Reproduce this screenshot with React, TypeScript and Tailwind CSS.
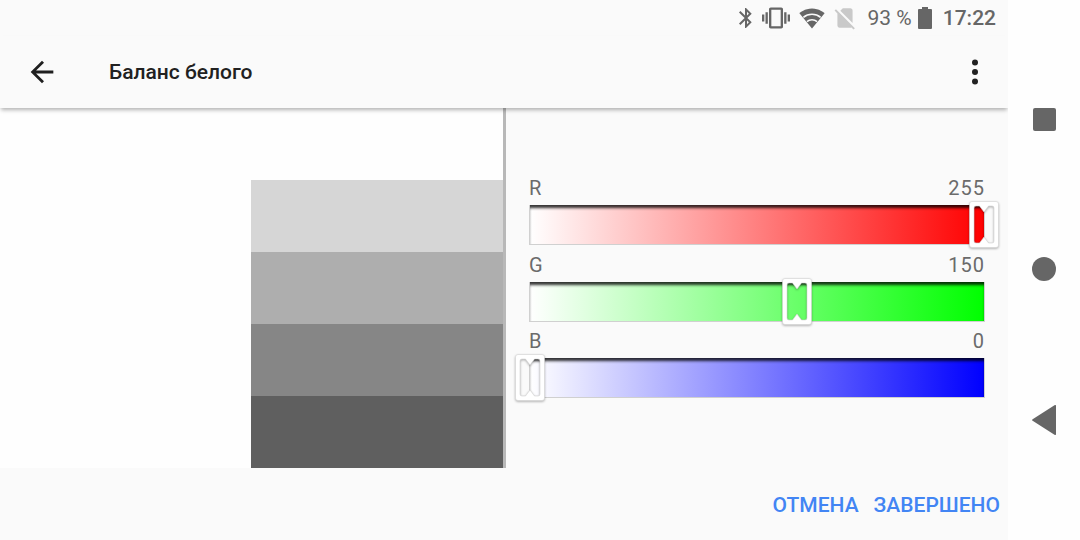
const channels = [
  { label: 'R', value: 255, gradient: 'bg-[linear-gradient(to_right,#ffffff,#ff0000)]' },
  { label: 'G', value: 150, gradient: 'bg-[linear-gradient(to_right,#ffffff,#00ff00)]' },
  { label: 'B', value: 0, gradient: 'bg-[linear-gradient(to_right,#ffffff,#0000ff)]' },
];

function Thumb({ value }: { value: number }) {
  return (
    <svg
      viewBox="0 0 30 47"
      className="absolute top-[-4px] w-[30px] h-[47px] -translate-x-1/2 drop-shadow-[0_1px_1px_rgba(0,0,0,0.3)]"
      style={{ left: `${(value / 255) * 100}%` }}
    >
      <path
        fillRule="evenodd"
        fill="#ffffff"
        stroke="#d4d4d4"
        strokeWidth="0.6"
        d="M3 .5h24a2.500 2.500 0 0 1 2.500 2.500v41a2.500 2.500 0 0 1-2.500 2.500H3A2.500 2.500 0 0 1 .5 44V3A2.500 2.500 0 0 1 3 .5zM7 5a2 2 0 0 0-2 2v33a2 2 0 0 0 2 2h3.500l4.500-6 4.500 6H23a2 2 0 0 0 2-2V7a2 2 0 0 0-2-2h-3.500L15 11l-4.500-6z"
      />
    </svg>
  );
}

function StatusIcons() {
  return (
    <div className="flex items-center text-[#666666]">
      <svg viewBox="0 0 24 24" className="w-[24px] h-[24px] mr-[4px]" fill="currentColor">
        <path d="M17.71 7.71L12 2h-1v7.59L6.41 5 5 6.41 10.59 12 5 17.59 6.41 19 11 14.41V22h1l5.71-5.71-4.3-4.29 4.3-4.29zM13 5.83l1.88 1.88L13 9.59V5.83zm1.88 10.46L13 18.17v-3.76l1.88 1.88z" />
      </svg>
      <svg viewBox="0 0 24 24" className="w-[28px] h-[28px] mr-[9px]" fill="currentColor">
        <path d="M0 15h2V9H0v6zm3 2h2V7H3v10zm19-8v6h2V9h-2zm-3 8h2V7h-2v10zM16.5 3h-9C6.67 3 6 3.67 6 4.5v15c0 .83.67 1.5 1.5 1.5h9c.83 0 1.5-.67 1.5-1.500v-15c0-.83-.67-1.500-1.500-1.500zM16 19H8V5h8v14z" />
      </svg>
      <svg viewBox="0 0 26 24" className="w-[26px] h-[24px] mr-[7px]" fill="currentColor">
        <path d="M13 22.500L.4 7.200C1 6.700 5.800 2.500 13 2.500s12 4.200 12.600 4.700L13 22.500z" />
        <path d="M4.400 11.400C6.600 9.500 9.600 8.300 13 8.300s6.400 1.200 8.600 3.100M7.900 15.700c1.400-1.200 3.200-1.900 5.100-1.900s3.700.7 5.100 1.900" fill="none" stroke="#fafafa" strokeWidth="1.600" />
      </svg>
      <svg viewBox="0 0 24 24" className="w-[26px] h-[26px] mr-[10px] text-[#c9c9c9]" fill="currentColor">
        <path d="M18.99 5c0-1.100-.89-2-1.990-2h-7L7.660 5.340 19 16.680 18.990 5zM3.650 3.880L2.380 5.150 5 7.770V19c0 1.100.9 2 2 2h10.010c.35 0 .67-.1.96-.26l1.880 1.880 1.270-1.270L3.650 3.880z" />
      </svg>
      <span className="text-[21px] leading-none mr-[6px]">93 %</span>
      <svg viewBox="0 0 14 22" className="w-[14px] h-[22px] mr-[11px]" fill="currentColor">
        <path d="M4 0h6v2h3a1 1 0 0 1 1 1v18a1 1 0 0 1-1 1H1a1 1 0 0 1-1-1V3a1 1 0 0 1 1-1h3z" />
      </svg>
      <span className="text-[21px] leading-none font-medium">17:22</span>
    </div>
  );
}

export default function App() {
  return (
    <div className="flex w-[1080px] h-[540px] bg-[#fefefe] overflow-hidden font-['Roboto',sans-serif]">
      <div className="flex flex-col w-[1008px] bg-[#fafafa] overflow-hidden">
        {/* Status bar */}
        <div className="flex justify-end items-center h-9 pr-3">
          <StatusIcons />
        </div>

        {/* Toolbar */}
        <div className="relative z-10 flex items-center h-[72px] shadow-[0_3px_4px_-1px_rgba(0,0,0,0.3)]">
          <svg viewBox="0 0 24 24" className="w-[34px] h-[34px] ml-[25px] text-[#1f1f1f]" fill="currentColor">
            <path d="M20 11H7.830l5.590-5.590L12 4l-8 8 8 8 1.410-1.410L7.830 13H20v-2z" />
          </svg>
          <span className="ml-[50px] pt-[2px] text-[21px] font-medium text-[#212121]">Баланс белого</span>
          <svg viewBox="0 0 6 26" className="ml-auto mr-[30px] w-[6px] h-[26px]" fill="#212121">
            <circle cx="3" cy="3.500" r="3" />
            <circle cx="3" cy="13" r="3" />
            <circle cx="3" cy="22.500" r="3" />
          </svg>
        </div>

        {/* Preview and sliders */}
        <div className="flex h-[360px]">
          <div className="flex justify-end items-end w-[503px] bg-[#fefefe]">
            <div className="flex flex-col w-[252px]">
              <div className="h-[72px] bg-[#d6d6d6]" />
              <div className="h-[72px] bg-[#aeaeae]" />
              <div className="h-[72px] bg-[#868686]" />
              <div className="h-[72px] bg-[#5f5f5f]" />
            </div>
          </div>
          <div className="w-[3px] bg-[#b8b8b8]" />
          <div className="flex-1 pl-[23px] pr-[23px] pt-[69px]">
            {channels.map((c) => (
              <div key={c.label} className="h-[76.500px]">
                <div className="flex justify-between items-center h-[28px] pb-[6px] text-[20px] tracking-[1px] text-[#6b6b6b]">
                  <span>{c.label}</span>
                  <span>{c.value}</span>
                </div>
                <div className={`relative h-[40px] border-x border-b border-[#d0d0d0] shadow-[inset_0_4px_3px_-1px_rgba(0,0,0,0.8)] ${c.gradient}`}>
                  <Thumb value={c.value} />
                </div>
              </div>
            ))}
          </div>
        </div>

        {/* Dialog actions */}
        <div className="flex flex-1 justify-end items-center gap-[15px] pr-2 pt-[4px] text-[21px] font-medium text-[#4285f4]">
          <span>ОТМЕНА</span>
          <span>ЗАВЕРШЕНО</span>
        </div>
      </div>

      {/* Navigation bar */}
      <div className="flex flex-col items-center w-[72px] pt-[108px]">
        <div className="w-[23px] h-[23px] rounded-[2px] bg-[#666666]" />
        <div className="mt-[126px] w-[24px] h-[24px] rounded-full bg-[#666666]" />
        <svg viewBox="0 0 24 30" className="mt-[124px] w-[24px] h-[30px]" fill="#666666">
          <path d="M24 1v28a1 1 0 0 1-1.500.8L.6 15.800a1 1 0 0 1 0-1.600L22.500.2A1 1 0 0 1 24 1z" />
        </svg>
      </div>
    </div>
  );
}
